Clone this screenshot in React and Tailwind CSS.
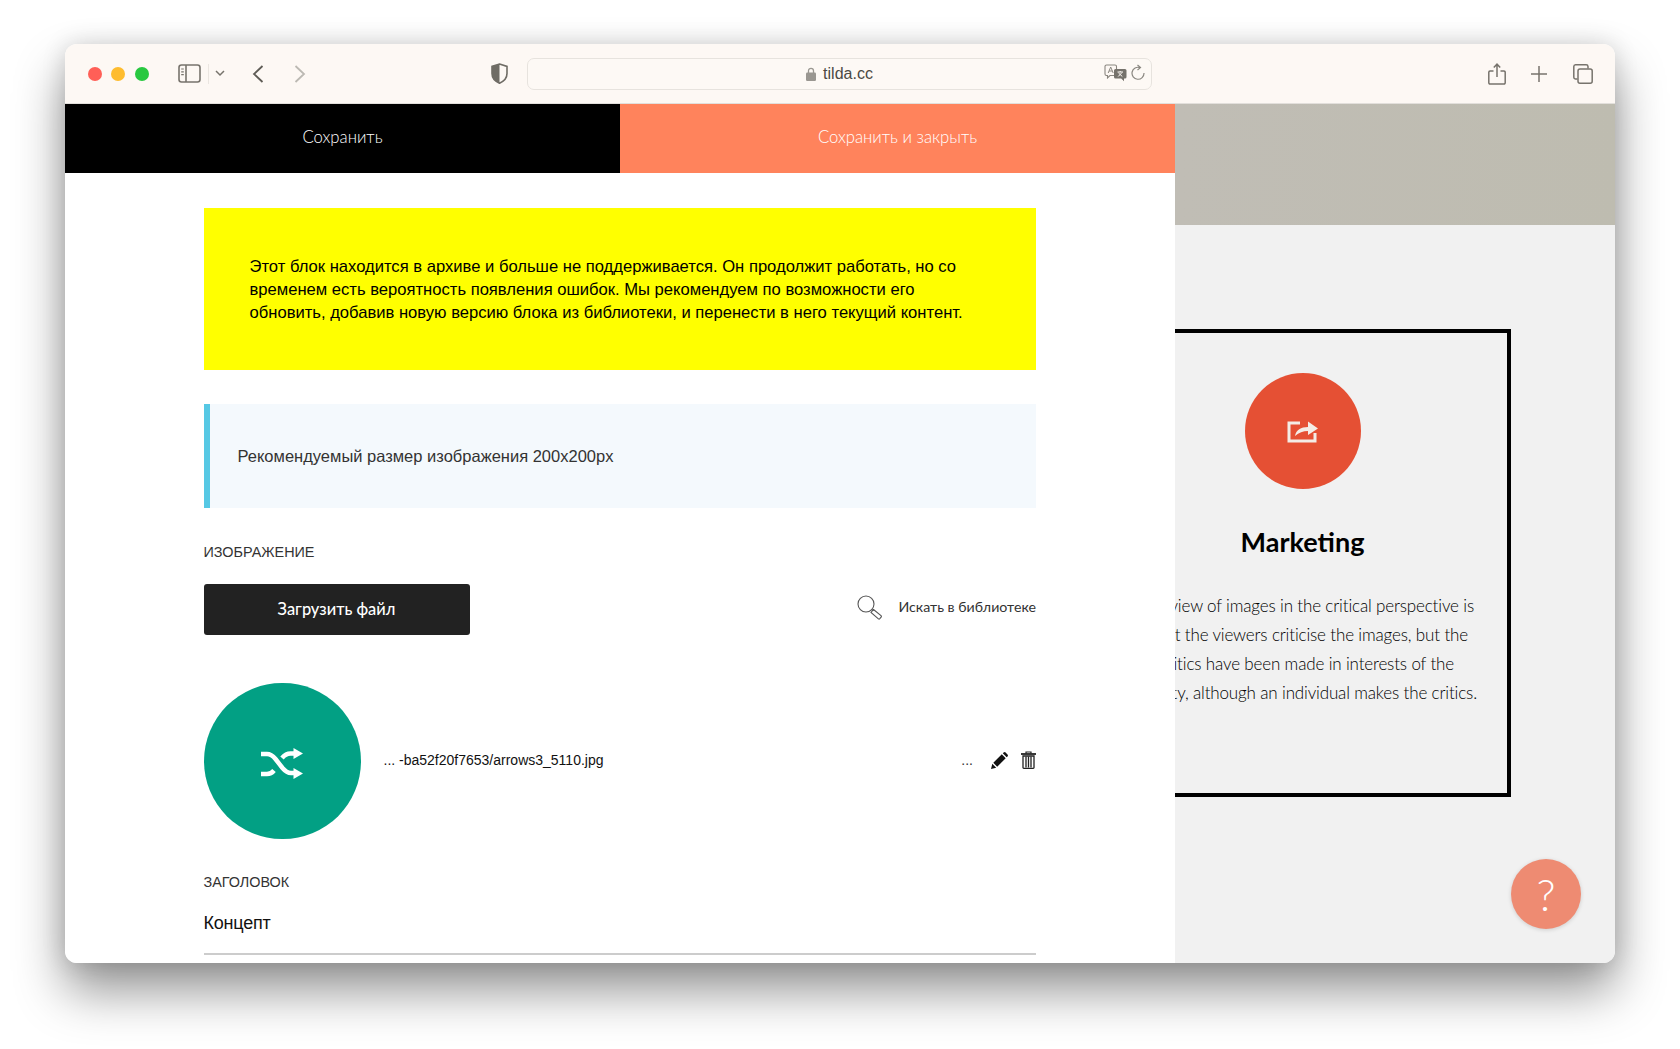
const futura = "font-['Lato','Noto_Sans',sans-serif]";
const helvetica = "font-['Liberation_Sans',Arial,sans-serif]";

function SidebarIcon() {
  return (
    <svg width="23" height="19" viewBox="0 0 23 19" fill="none" stroke="#77736c" strokeWidth="1.6">
      <rect x="1" y="1" width="21" height="17" rx="2.5" />
      <path d="M8 1v17" />
      <path d="M3.2 5h2.6M3.2 7.8h2.6M3.2 10.6h2.6" strokeWidth="1.2" />
    </svg>
  );
}

function Shield() {
  return (
    <svg width="17" height="21" viewBox="0 0 17 21">
      <path d="M8.5 1 16 3.4v7.2c0 4.6-3.2 7.8-7.5 9.6C4.200 18.400 1 15.200 1 10.600V3.400Z" fill="none" stroke="#6f6c65" strokeWidth="1.6" />
      <path d="M8.500 1 1 3.400v7.200c0 4.600 3.200 7.800 7.500 9.600Z" fill="#6f6c65" />
    </svg>
  );
}

function TranslateIcon() {
  return (
    <svg width="23" height="18" viewBox="0 0 23 18">
      <path d="M2.500 1h8.500a1.500 1.500 0 0 1 1.500 1.500V10a1.500 1.500 0 0 1-1.500 1.500H6L3.500 14v-2.500h-1A1.500 1.500 0 0 1 1 10V2.500A1.500 1.500 0 0 1 2.500 1Z" fill="#fdf8f4" stroke="#8a8780" strokeWidth="1.100" />
      <path d="M4.200 9 6.700 3l2.500 6M5.100 7h3.200" fill="none" stroke="#8a8780" strokeWidth="1" />
      <path d="M11.500 5H21a1.500 1.500 0 0 1 1.500 1.500V13a1.500 1.500 0 0 1-1.500 1.500h-1v2.800l-2.800-2.800h-5.700a1.500 1.500 0 0 1-1.500-1.500V6.500A1.500 1.500 0 0 1 11.500 5Z" fill="#75726b" />
      <path d="M13.500 8h5.500M16.200 7v1M14.200 12.500 18 8.500M14.500 9l3.800 3.500" fill="none" stroke="#fdf8f4" strokeWidth="1" />
    </svg>
  );
}

function Shuffle() {
  return (
    <svg className="mt-[5px]" width="44" height="32" viewBox="0 0 44 32" fill="none" stroke="#fff" strokeWidth="4.500">
      <path d="M1 6h6c4 0 6 2 8.500 5l7 9c2.500 3 4.500 5 8.500 5h5" />
      <path d="M1 26h6c3 0 5-1 7-3.500M22 10c2.500-3 4.500-4.500 8.500-4.500h5" />
      <path d="M33.500 0 43 5.500 33.500 11ZM33.500 20 43 25.500 33.500 31Z" fill="#fff" stroke="none" />
    </svg>
  );
}

function Magnifier() {
  return (
    <svg width="25" height="25" viewBox="0 0 25 25" fill="none" stroke="#555" strokeWidth="1.100">
      <circle cx="9" cy="9" r="8" />
      <path d="m14.800 14.800 2 .6" />
      <path d="m16.500 14.500 7.500 6.200a1 1 0 0 1 .1 1.400l-1.300 1.600a1 1 0 0 1-1.400.1L14 17.500Z" />
    </svg>
  );
}

function Pencil() {
  return (
    <svg width="17" height="17" viewBox="0 0 17 17" fill="#111">
      <path d="M0 17 1.300 11.800 5.200 15.700Z" />
      <path d="M2.300 10.800 10.800 2.300 14.700 6.200 6.200 14.700Z" />
      <path d="M11.800 1.300 12.600.5a1.500 1.500 0 0 1 2 0l1.900 1.900a1.500 1.500 0 0 1 0 2l-.8.800Z" />
    </svg>
  );
}

function Trash() {
  return (
    <svg width="15" height="18" viewBox="0 0 15 18" fill="none" stroke="#222">
      <path d="M0 3h15" strokeWidth="1.800" />
      <path d="M5 2.500V1h5v1.500" strokeWidth="1.200" />
      <path d="M2 5h11v11.500a.8.8 0 0 1-.8.800H2.800a.8.8 0 0 1-.8-.8Z" strokeWidth="1.300" />
      <path d="M5 5.500v11M7.500 5.500v11M10 5.500v11" strokeWidth="1.300" />
    </svg>
  );
}

function ShareArrow() {
  return (
    <svg width="32" height="24" viewBox="0 0 32 24" fill="none">
      <path d="M13 4H2v18h26v-8" stroke="#f4ece6" strokeWidth="3" />
      <path d="M8 17c1-6 6-9 13-9V2.500L31 9.500 21 16v-4c-5 0-9 1.500-13 5Z" fill="#f4ece6" />
    </svg>
  );
}

function Toolbar() {
  return (
    <div className="flex h-[60px] shrink-0 items-center border-b border-[#e2dfdb] bg-[#fdf8f4] pl-[22.500px]">
      <div className="flex gap-[9.500px]">
        <span className="h-[14px] w-[14px] rounded-full bg-[#ff5f57]" />
        <span className="h-[14px] w-[14px] rounded-full bg-[#febc2e]" />
        <span className="h-[14px] w-[14px] rounded-full bg-[#28c840]" />
      </div>
      <div className="ml-[29.500px]"><SidebarIcon /></div>
      <div className="ml-[7px] h-[20px] w-px bg-[#ebe6e1]" />
      <svg className="ml-[6px]" width="10" height="7" viewBox="0 0 10 7" fill="none" stroke="#77736c" strokeWidth="1.500"><path d="m1 1 4 4 4-4" /></svg>
      <svg className="ml-[27px]" width="12" height="18" viewBox="0 0 12 18" fill="none" stroke="#5f5c56" strokeWidth="1.800"><path d="M10.500 1 2 9l8.500 8" /></svg>
      <svg className="ml-[30px]" width="12" height="18" viewBox="0 0 12 18" fill="none" stroke="#bcb9b3" strokeWidth="1.800"><path d="M1.500 1 10 9l-8.500 8" /></svg>
      <div className="ml-[185px]"><Shield /></div>
      <div className="relative ml-[19px] flex h-[32px] w-[625px] items-center justify-center rounded-[7px] border border-[#e7e3de] bg-[#fdf9f5]">
        <svg width="10" height="14" viewBox="0 0 10 14" className="mr-[7px]">
          <path d="M2.500 6V3.800a2.500 2.500 0 0 1 5 0V6" fill="none" stroke="#9a9791" strokeWidth="1.300" />
          <rect y="5.500" width="10" height="8.500" rx="1.300" fill="#9a9791" />
        </svg>
        <span className={`${helvetica} text-[16px] text-[#4b4944]`}>tilda.cc</span>
        <div className="absolute right-[6px] top-[5px] flex items-center gap-[4px]">
          <TranslateIcon />
          <svg width="14" height="18" viewBox="0 0 14 18" fill="none" stroke="#8a8780" strokeWidth="1.200">
            <path d="M9 3.600A6 6 0 1 0 13 9" />
            <path d="M6.500 1 9.500 3.600 6.500 6" />
          </svg>
        </div>
      </div>
      <svg className="ml-[336px]" width="18" height="22" viewBox="0 0 18 22" fill="none" stroke="#77736c" strokeWidth="1.500">
        <path d="M5.500 8H2a1.200 1.200 0 0 0-1.200 1.200v10.600A1.200 1.200 0 0 0 2 21h14a1.200 1.200 0 0 0 1.200-1.200V9.200A1.200 1.200 0 0 0 16 8h-3.500" />
        <path d="M9 14V1.500M5.800 4.500 9 1.200l3.200 3.300" />
      </svg>
      <svg className="ml-[25px]" width="16" height="16" viewBox="0 0 16 16" fill="none" stroke="#77736c" strokeWidth="1.500"><path d="M8 0v16M0 8h16" /></svg>
      <svg className="ml-[26px]" width="20" height="20" viewBox="0 0 20 20" fill="none" stroke="#77736c" strokeWidth="1.500">
        <path d="M4.500 15H2.500A1.800 1.800 0 0 1 .8 13.200V2.500A1.800 1.800 0 0 1 2.500.8h10.700A1.800 1.800 0 0 1 15 2.500V4.500" />
        <rect x="5" y="5" width="14.200" height="14.200" rx="2" />
      </svg>
    </div>
  );
}

function EditorPanel() {
  return (
    <div className="flex w-[1110px] shrink-0 flex-col bg-white">
      <div className={`${futura} flex h-[69px] shrink-0 text-[16.700px] font-light text-white`}>
        <div className="flex w-[555px] items-center justify-center bg-black pb-[1px]">Сохранить</div>
        <div className="flex w-[555px] items-center justify-center bg-[#ff835c] pb-[1px]">Сохранить и закрыть</div>
      </div>

      <div className={`${helvetica} pl-[138.500px] pr-[139px] pt-[35px]`}>
        <div className="flex h-[162px] items-center bg-[#ffff00] px-[46px] text-[16.600px] leading-[23px] text-black">
          <p className="whitespace-nowrap">
            Этот блок находится в архиве и больше не поддерживается. Он продолжит работать, но со<br />
            временем есть вероятность появления ошибок. Мы рекомендуем по возможности его<br />
            обновить, добавив новую версию блока из библиотеки, и перенести в него текущий контент.
          </p>
        </div>

        <div className="mt-[34px] flex h-[104px] items-center border-l-[6px] border-[#56c8e4] bg-[#f4f9fd] pl-[28px] pt-[1px] text-[16.500px] text-[#333]">
          Рекомендуемый размер изображения 200х200px
        </div>

        <div className="mt-[35px] text-[14.400px] leading-[18px] text-[#333]">ИЗОБРАЖЕНИЕ</div>

        <div className="mt-[23px] flex items-center justify-between">
          <button className={`${futura} h-[51px] w-[266px] rounded-[3px] bg-[#222] text-[16.400px] font-medium text-white`}>
            Загрузить файл
          </button>
          <div className={`${futura} flex items-center pb-[5px] text-[14.200px] text-[#333]`}>
            <Magnifier />
            <span className="ml-[16px]">Искать в библиотеке</span>
          </div>
        </div>

        <div className="mt-[48px] flex items-center">
          <div className="flex h-[156px] w-[157px] items-center justify-center rounded-full bg-[#02a084]">
            <Shuffle />
          </div>
          <span className="ml-[23px] pb-[2px] text-[14px] text-[#111]">... -ba52f20f7653/arrows3_5110.jpg</span>
          <div className="ml-auto flex items-center pb-[2px]">
            <span className="mr-[18px] text-[14px] text-[#333]">...</span>
            <Pencil />
            <span className="ml-[13px]"><Trash /></span>
          </div>
        </div>

        <div className="mt-[34px] text-[14.400px] leading-[18px] text-[#333]">ЗАГОЛОВОК</div>
        <div className="mt-[20px] text-[18px] leading-[24px] tracking-[-0.2px] text-[#111]">Концепт</div>
        <div className="mt-[18px] h-[2px] bg-[#ccc]" />
      </div>
    </div>
  );
}

const cardLines = [
  { text: "The view of images in the critical perspective is", inset: "pr-[3px]" },
  { text: "that the viewers criticise the images, but the", inset: "pr-[9px]" },
  { text: "The critics have been made in interests of the", inset: "pr-[23px]" },
  { text: "society, although an individual makes the critics.", inset: "pr-0" },
];

function PreviewPanel() {
  return (
    <div className="relative min-w-0 flex-1 overflow-hidden bg-[#f1f1f1]">
      <div className="h-[121px] bg-gradient-to-r from-[#c0bdb5] to-[#bebcb0]" />
      <div className={`${futura} mt-[104px] ml-[-81px] flex h-[468px] w-[417px] flex-col items-center border-4 border-black`}>
        <div className="mt-[40px] flex h-[116px] w-[116px] items-center justify-center rounded-full bg-[#e55034]">
          <ShareArrow />
        </div>
        <h2 className="mt-[31px] text-[27px] font-bold leading-[44px] text-black">Marketing</h2>
        <div className="mr-[30px] mt-[27px] self-end text-[17px] font-light leading-[29px] tracking-[-0.15px] text-black">
          {cardLines.map((line) => (
            <div key={line.text} className={`flex justify-end whitespace-nowrap ${line.inset}`}>{line.text}</div>
          ))}
        </div>
      </div>
      <div className={`${futura} absolute bottom-[34px] right-[34px] flex h-[70px] w-[70px] items-center justify-center rounded-full bg-[#ee8b72] text-[44px] font-light text-white shadow-[0_1px_4px_rgba(0,0,0,0.15)]`}>
        ?
      </div>
    </div>
  );
}

export default function App() {
  return (
    <div className="h-[1049px] w-[1680px] overflow-hidden bg-white pl-[65px] pt-[44px]">
      <div className="flex h-[919px] w-[1550px] flex-col overflow-hidden rounded-[12px] shadow-[0_28px_50px_rgba(0,0,0,0.42),0_0_24px_rgba(0,0,0,0.14)]">
        <Toolbar />
        <div className="flex min-h-0 flex-1">
          <EditorPanel />
          <PreviewPanel />
        </div>
      </div>
    </div>
  );
}
